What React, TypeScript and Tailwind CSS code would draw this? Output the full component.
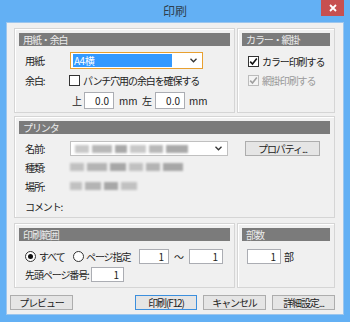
import { ReactNode } from 'react';

const FONT = { fontFamily: '"Noto Sans CJK JP", "Noto Sans", sans-serif' };

function Group({ title, className = '', children }: { title: string; className?: string; children?: ReactNode }) {
  return (
    <div className={`border border-[#d5d5d5] shadow-[inset_1px_1px_0_#ffffff] p-[4px] flex flex-col ${className}`}>
      <div className="h-[13px] bg-[#7b7b7b] text-[#ececec] leading-[13px] pl-[4px] whitespace-nowrap">{title}</div>
      {children}
    </div>
  );
}

function TextBox({ value, className = '' }: { value: string; className?: string }) {
  return (
    <div
      className={`h-[15px] bg-white border border-[#abadb3] leading-[13px] text-right pr-[4px] text-[#222] tracking-normal ${className}`}
    >
      {value}
    </div>
  );
}

function Chevron() {
  return (
    <svg width="7" height="5" viewBox="0 0 7 5" className="shrink-0">
      <path d="M0.5 0.8 L3.5 3.8 L6.5 0.8" fill="none" stroke="#333" strokeWidth="1.3" />
    </svg>
  );
}

function CheckBox({ checked, disabled }: { checked?: boolean; disabled?: boolean }) {
  return (
    <div
      className={`w-[11px] h-[11px] border ${disabled ? 'border-[#bcbcbc] bg-[#f4f4f4]' : 'border-[#333] bg-white'} flex items-center justify-center shrink-0`}
    >
      {checked && (
        <svg width="9" height="9" viewBox="0 0 9 9">
          <path d="M1.2 4.6 L3.5 7 L7.8 1.6" fill="none" stroke={disabled ? '#a0a0a0' : '#111'} strokeWidth="1.6" />
        </svg>
      )}
    </div>
  );
}

function Radio({ checked }: { checked?: boolean }) {
  return (
    <div className="w-[11px] h-[11px] rounded-full border border-[#333] bg-white flex items-center justify-center shrink-0">
      {checked && <div className="w-[5px] h-[5px] rounded-full bg-[#111]" />}
    </div>
  );
}

function Button({ label, className = '', primary }: { label: string; className?: string; primary?: boolean }) {
  return (
    <div
      className={`h-[15px] border ${primary ? 'border-[#3c8fdd]' : 'border-[#adadad]'} bg-[#e5e5e5] leading-[13px] text-center text-[#222] whitespace-nowrap ${className}`}
    >
      {label}
    </div>
  );
}

function Blur({ w }: { w: number[] }) {
  return (
    <div className="flex gap-[3px] blur-[1.2px]">
      {w.map((x, i) => (
        <div key={i} className="h-[8px] bg-[#9a9a9a]" style={{ width: x, opacity: 0.55 + (i % 3) * 0.15 }} />
      ))}
    </div>
  );
}

export default function App() {
  return (
    <div className="w-[350px] h-[322px] bg-[#63b0f4] flex flex-col text-[#222]" style={FONT}>
      <div className="h-[22px] relative flex items-center justify-center">
        <span className="text-[12px] text-[#2e3f4d] mt-[-1px]">印刷</span>
        <div className="absolute right-[6px] top-0 w-[23px] h-[16px] bg-[#c75050] flex items-center justify-center">
          <svg width="8" height="8" viewBox="0 0 8 8">
            <path d="M1 1 L7 7 M7 1 L1 7" stroke="#fff" strokeWidth="1.8" />
          </svg>
        </div>
      </div>
      <div className="mx-[6px] h-[293px] bg-[#f0f0f0] border border-[#9cc6ee] pl-[7px] pr-[8px] pt-[5px] flex flex-col text-[10px] tracking-[-1.1px]">
        <div className="flex gap-[2px] h-[85px]">
          <Group title="用紙・余白" className="w-[221px]">
            <div className="flex items-center mt-[6px] pl-[6px] h-[17px]">
              <span className="w-[45px]">用紙:</span>
              <div className="w-[133px] h-[17px] border border-[#e8a030] bg-white flex items-center pl-[2px] pr-[5px]">
                <div className="w-[99px] h-[13px] bg-[#3399ff] text-white leading-[13px] pl-[1px] tracking-[-0.5px]">A4横</div>
                <div className="flex-1" />
                <Chevron />
              </div>
            </div>
            <div className="flex items-center mt-[5px] pl-[6px] h-[12px]">
              <span className="w-[44px]">余白:</span>
              <CheckBox />
              <span className="ml-[3px] whitespace-nowrap">パンチ穴用の余白を確保する</span>
            </div>
            <div className="flex items-center mt-[6px] pl-[53px] h-[17px]">
              <span className="w-[12px]">上</span>
              <TextBox value="0.0" className="w-[30px] h-[17px] leading-[15px]" />
              <span className="ml-[5px] w-[23px] tracking-normal">mm</span>
              <span className="w-[13px]">左</span>
              <TextBox value="0.0" className="w-[30px] h-[17px] leading-[15px]" />
              <span className="ml-[4px] tracking-normal">mm</span>
            </div>
          </Group>
          <Group title="カラー・網掛" className="w-[98px]">
            <div className="flex items-center mt-[9px] pl-[6px] h-[12px]">
              <CheckBox checked />
              <span className="ml-[3px] whitespace-nowrap">カラー印刷する</span>
            </div>
            <div className="flex items-center mt-[7px] pl-[6px] h-[12px]">
              <CheckBox checked disabled />
              <span className="ml-[3px] whitespace-nowrap text-[#9a9a9a]">網掛印刷する</span>
            </div>
          </Group>
        </div>

        <Group title="プリンタ" className="mt-[3px] h-[102px]">
          <div className="flex items-center mt-[7px] pl-[6px] h-[15px]">
            <span className="w-[45px]">名前:</span>
            <div className="w-[158px] h-[15px] border border-[#c0c0c0] bg-white flex items-center pl-[4px] pr-[5px]">
              <Blur w={[14, 20, 12, 16, 14, 22]} />
              <div className="flex-1" />
              <Chevron />
            </div>
            <Button label="プロパティ..." className="ml-[17px] w-[75px]" />
          </div>
          <div className="flex items-center mt-[4px] pl-[6px] h-[14px]">
            <span className="w-[45px]">種類:</span>
            <Blur w={[14, 20, 16, 14, 14, 20]} />
          </div>
          <div className="flex items-center mt-[5px] pl-[6px] h-[14px]">
            <span className="w-[45px]">場所:</span>
            <Blur w={[12, 16, 14, 16]} />
          </div>
          <div className="flex items-center mt-[6px] pl-[6px] h-[14px]">
            <span className="whitespace-nowrap">コメント:</span>
          </div>
        </Group>

        <div className="flex gap-[2px] h-[65px] mt-[5px]">
          <Group title="印刷範囲" className="w-[221px]">
            <div className="flex items-center mt-[8px] pl-[6px] h-[15px]">
              <Radio checked />
              <span className="ml-[3px] w-[34px] whitespace-nowrap">すべて</span>
              <Radio />
              <span className="ml-[2px] w-[53px] whitespace-nowrap">ページ指定</span>
              <TextBox value="1" className="w-[30px] h-[15px]" />
              <span className="w-[20px] text-center tracking-normal">～</span>
              <TextBox value="1" className="w-[34px] h-[15px]" />
            </div>
            <div className="flex items-center mt-[3px] pl-[6px] h-[15px]">
              <span className="w-[66px] whitespace-nowrap">先頭ページ番号:</span>
              <TextBox value="1" className="w-[33px] h-[15px]" />
            </div>
          </Group>
          <Group title="部数" className="w-[98px]">
            <div className="flex items-center mt-[8px] pl-[5px] h-[15px]">
              <TextBox value="1" className="w-[34px] h-[15px]" />
              <span className="ml-[3px]">部</span>
            </div>
          </Group>
        </div>

        <div className="flex items-center mt-[7px] h-[15px] -ml-[4px]">
          <Button label="プレビュー" className="w-[63px]" />
          <div className="flex-1" />
          <Button label="印刷(F12)" primary className="w-[62px]" />
          <Button label="キャンセル" className="ml-[6px] w-[63px]" />
          <Button label="詳細設定..." className="ml-[6px] w-[63px]" />
        </div>
      </div>
    </div>
  );
}
